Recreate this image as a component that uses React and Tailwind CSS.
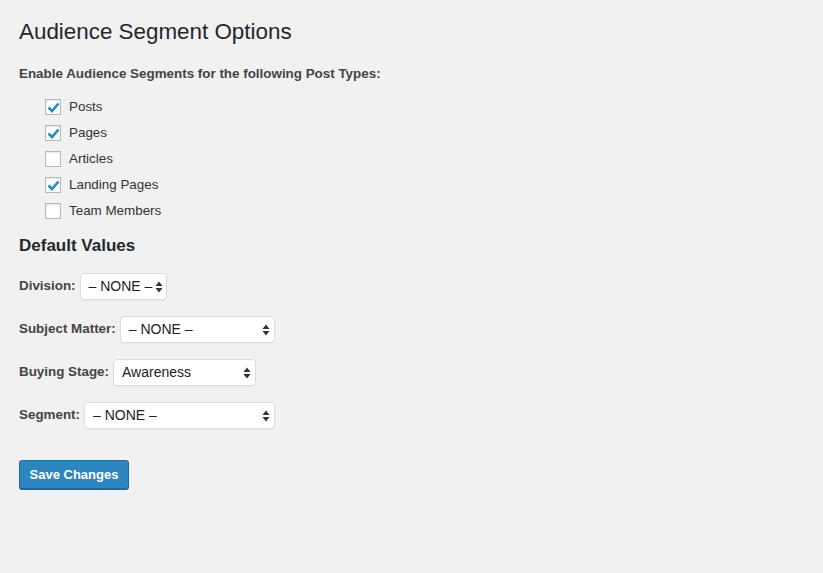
import React, { useState } from 'react';

const postTypes = [
  { id: 'posts', label: 'Posts', checked: true },
  { id: 'pages', label: 'Pages', checked: true },
  { id: 'articles', label: 'Articles', checked: false },
  { id: 'landing', label: 'Landing Pages', checked: true },
  { id: 'team', label: 'Team Members', checked: false },
];

const Arrows = () => (
  <svg width="8" height="12" viewBox="0 0 8 12" className="shrink-0">
    <path d="M4 0.5 L7.5 5 L0.5 5 Z" fill="#333" />
    <path d="M4 11.5 L7.5 7 L0.5 7 Z" fill="#333" />
  </svg>
);

const FakeSelect = ({ value, width }) => (
  <div
    className={`flex items-center justify-between gap-[3px] h-[27px] pl-[8px] pr-[4px] bg-white border border-[#dcdcdc] rounded-[4px] shadow-[0_1px_1px_rgba(0,0,0,0.04)] text-[14px] font-normal whitespace-nowrap text-[#222] ${width}`}
  >
    <span>{value}</span>
    <Arrows />
  </div>
);

const Checkbox = ({ checked, onChange }) => (
  <button
    type="button"
    onClick={onChange}
    className="w-[16px] h-[16px] border border-[#b4b9be] bg-white flex items-center justify-center shadow-[inset_0_1px_2px_rgba(0,0,0,0.1)]"
  >
    {checked && (
      <svg width="13" height="11" viewBox="0 0 13 11">
        <path d="M1.5 5.5 L5 9 L11.5 1.5" stroke="#1e8cbe" strokeWidth="2.6" fill="none" strokeLinejoin="miter" />
      </svg>
    )}
  </button>
);

const App = () => {
  const [types, setTypes] = useState(postTypes);

  const toggle = (id) =>
    setTypes(types.map((t) => (t.id === id ? { ...t, checked: !t.checked } : t)));

  return (
    <div className="min-h-screen w-full bg-[#f1f1f1] text-[#23282d] font-['Liberation_Sans',Arial,sans-serif] pl-[19px] pt-[19px]">
      <h1 className="text-[22.4px] leading-[26px] font-normal">Audience Segment Options</h1>

      <p className="mt-[21px] text-[13.4px] font-bold text-[#444] leading-[16px]">
        Enable Audience Segments for the following Post Types:
      </p>

      {/* Post type checkboxes */}
      <ul className="mt-[12px] pl-[26px] flex flex-col">
        {types.map((t) => (
          <li key={t.id} className="flex items-center h-[26px] gap-[8px]">
            <Checkbox checked={t.checked} onChange={() => toggle(t.id)} />
            <span className="text-[13.4px] text-[#333]">{t.label}</span>
          </li>
        ))}
      </ul>

      <h2 className="mt-[12px] text-[17px] font-bold leading-[20px]">Default Values</h2>

      {/* Default value selects */}
      <div className="mt-[17px] flex flex-col gap-[16px] text-[13.4px] font-bold text-[#444]">
        <div className="flex items-center gap-[4px]">
          <span>Division:</span>
          <FakeSelect value="– NONE –" width="w-[87px]" />
        </div>
        <div className="flex items-center gap-[4px]">
          <span>Subject Matter:</span>
          <FakeSelect value="– NONE –" width="w-[155px]" />
        </div>
        <div className="flex items-center gap-[4px]">
          <span>Buying Stage:</span>
          <FakeSelect value="Awareness" width="w-[143px]" />
        </div>
        <div className="flex items-center gap-[4px]">
          <span>Segment:</span>
          <FakeSelect value="– NONE –" width="w-[191px]" />
        </div>
      </div>

      <button
        type="button"
        className="mt-[31px] h-[29px] w-[110px] rounded-[3px] bg-[#2e86c1] border border-[#1f6a9e] shadow-[0_1px_0_#1f6a9e] text-white text-[13px] font-bold"
      >
        Save Changes
      </button>
    </div>
  );
};

export default App;
